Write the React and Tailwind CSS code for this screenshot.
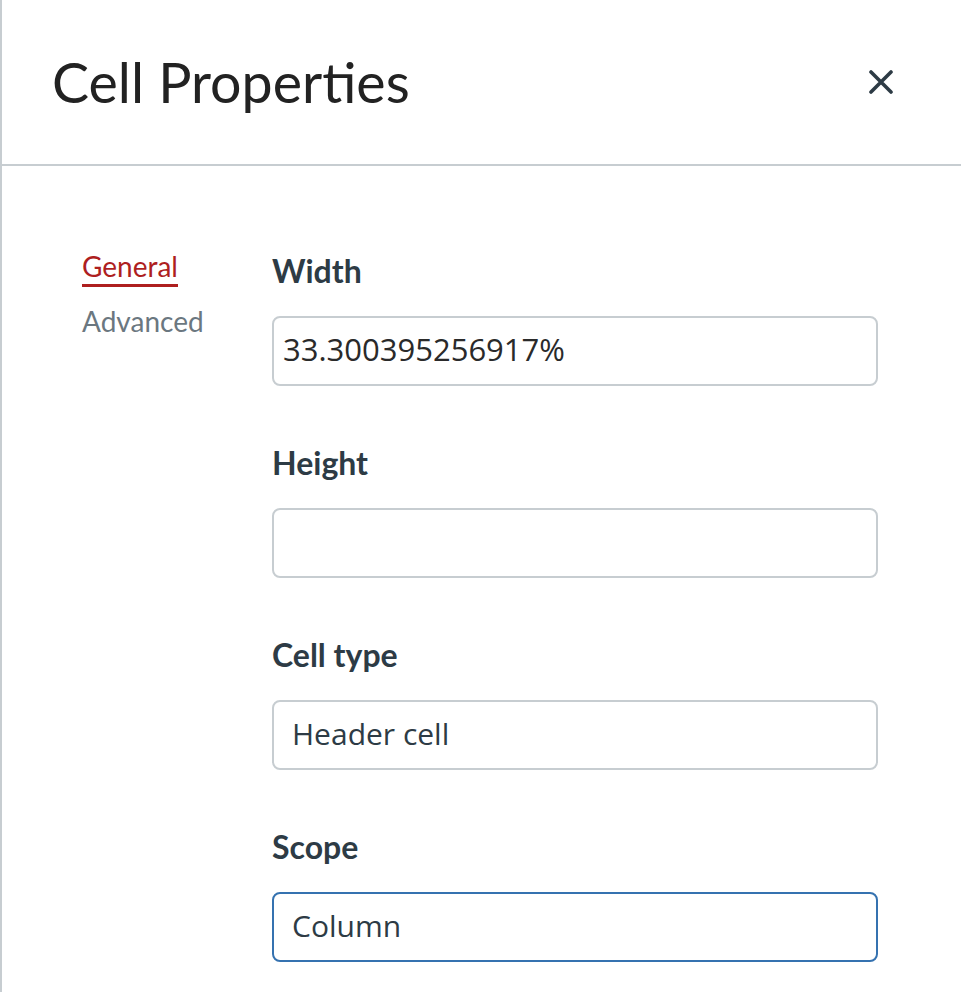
import React from 'react';

const lato = { fontFamily: 'Lato, "Open Sans", sans-serif' };

function Field({ label, value, focused, valueClass }) {
  return (
    <div className="mb-[57px]">
      <label className="block text-[32px] leading-[40px] font-bold text-[#2d3b45]" style={lato}>
        {label}
      </label>
      <div
        className={
          'mt-[25px] h-[70px] rounded-[8px] border-2 flex items-center pb-[3px] ' +
          (focused ? 'border-[#3572b0]' : 'border-[#c7cdd1]')
        }
      >
        <span className={valueClass}>{value}</span>
      </div>
    </div>
  );
}

export default function App() {
  return (
    <div className="w-[961px] h-[992px] overflow-hidden bg-white border-l-2 border-[#c7cdd1]">
      <header className="h-[166px] flex items-center justify-between pl-[50px] pr-[68px] border-b-2 border-[#c7cdd1]">
        <h1 className="text-[55.5px] leading-[64px] text-[#222]" style={lato}>Cell Properties</h1>
        <button className="w-6 h-6 text-[#2d3b45]" aria-label="Close">
          <svg viewBox="0 0 24 24" width="24" height="24" fill="none" stroke="currentColor" strokeWidth="3.6" strokeLinecap="round">
            <path d="M2 2 L22 22 M22 2 L2 22" />
          </svg>
        </button>
      </header>

      <div className="flex pt-[82px]">
        <nav className="w-[270px] pl-[80px] shrink-0" style={lato}>
          <a className="inline-block text-[28px] leading-[36px] text-[#ae1f1f] border-b-[3px] border-[#ae1f1f]">General</a>
          <a className="block mt-[16px] text-[28px] leading-[36px] text-[#6b7780]">Advanced</a>
        </nav>

        <form className="w-[606px] mt-[3px]">
          <Field
            label="Width"
            value="33.300395256917%"
            valueClass="pl-[9px] text-[31px] text-[#2a2a2a] font-['Open_Sans',sans-serif]"
          />
          <Field label="Height" value="" />
          <Field
            label="Cell type"
            value="Header cell"
            valueClass="pl-[18px] text-[30px] text-[#2d3b45] font-['Open_Sans',sans-serif]"
          />
          <Field
            label="Scope"
            value="Column"
            focused
            valueClass="pl-[18px] text-[30px] text-[#2d3b45] font-['Open_Sans',sans-serif]"
          />
        </form>
      </div>
    </div>
  );
}
